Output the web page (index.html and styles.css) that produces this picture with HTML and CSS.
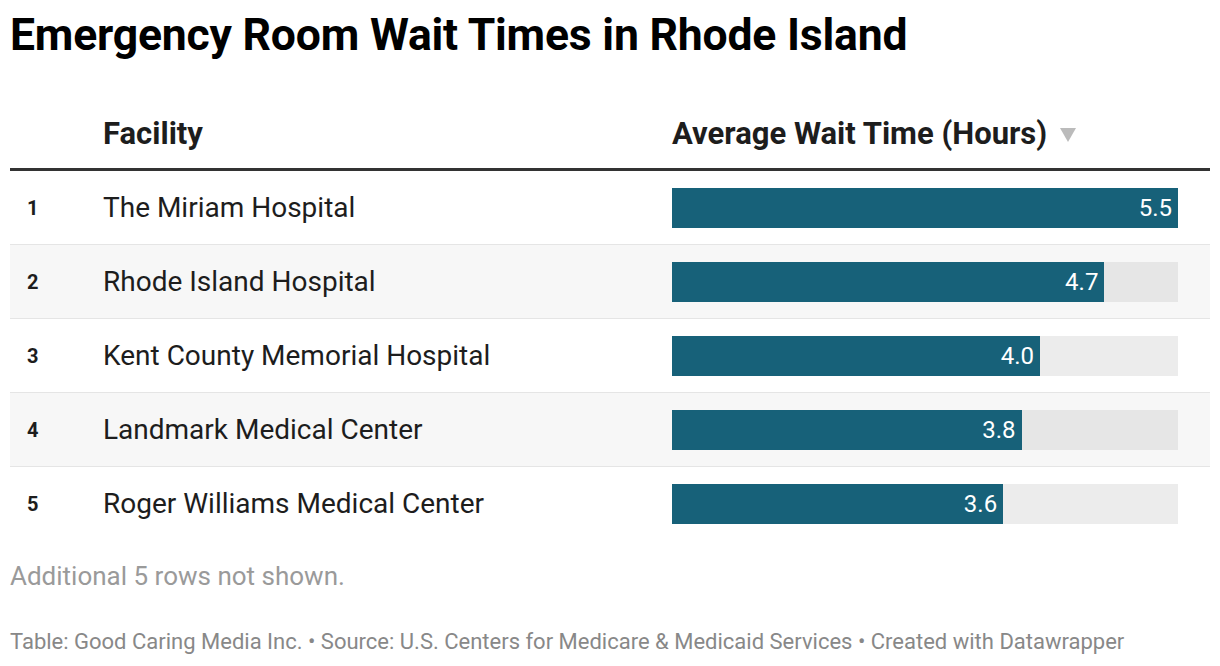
FILE: index.html
```html
<!DOCTYPE html>
<html>
<head>
<meta charset="utf-8">
<link rel="stylesheet" href="styles.css">
</head>
<body>
<div class="chart">
  <h1 class="title">Emergency Room Wait Times in Rhode Island</h1>
  <div class="table">
    <div class="row head">
      <div class="rank"></div>
      <div class="name">Facility</div>
      <div class="val">Average Wait Time (Hours)<svg class="sort" width="16" height="14" viewBox="0 0 16 14"><polygon points="0,0 16,0 8,14" fill="#bbbbbb"/></svg></div>
    </div>
    <div class="row">
      <div class="rank">1</div>
      <div class="name">The Miriam Hospital</div>
      <div class="val"><div class="track"><div class="bar" style="width:100%">5.5</div></div></div>
    </div>
    <div class="row alt">
      <div class="rank">2</div>
      <div class="name">Rhode Island Hospital</div>
      <div class="val"><div class="track"><div class="bar" style="width:85.45%">4.7</div></div></div>
    </div>
    <div class="row">
      <div class="rank">3</div>
      <div class="name">Kent County Memorial Hospital</div>
      <div class="val"><div class="track"><div class="bar" style="width:72.73%">4.0</div></div></div>
    </div>
    <div class="row alt">
      <div class="rank">4</div>
      <div class="name">Landmark Medical Center</div>
      <div class="val"><div class="track"><div class="bar" style="width:69.09%">3.8</div></div></div>
    </div>
    <div class="row last">
      <div class="rank">5</div>
      <div class="name">Roger Williams Medical Center</div>
      <div class="val"><div class="track"><div class="bar" style="width:65.45%">3.6</div></div></div>
    </div>
  </div>
  <p class="note">Additional 5 rows not shown.</p>
  <p class="footer">Table: Good Caring Media Inc. • Source: U.S. Centers for Medicare &amp; Medicaid Services • Created with Datawrapper</p>
</div>
</body>
</html>
```

FILE: styles.css
```css
html, body {
  margin: 0;
  padding: 0;
  background: #ffffff;
}
.chart {
  padding: 0 10px;
  font-family: Roboto, "Liberation Sans", sans-serif;
  color: #1d1d1d;
}
.title {
  margin: 0;
  padding-top: 10px;
  font-size: 44.5px;
  line-height: 50px;
  font-weight: 700;
  color: #000;
  letter-spacing: -0.2px;
}
.table {
  margin-top: 43px;
}
.row {
  display: grid;
  grid-template-columns: 93px 569px 506px 32px;
  align-items: center;
  height: 73px;
  border-bottom: 1px solid #e5e5e5;
}
.row.head {
  height: 65px;
  align-items: start;
  border-bottom: 3px solid #333;
}
.row.alt {
  background: #f7f7f7;
}
.row.last {
  border-bottom: none;
}
.rank {
  padding-left: 17px;
  font-size: 20px;
  font-weight: 700;
}
.name {
  font-size: 28px;
}
.head .name, .head .val {
  font-size: 31px;
  line-height: 36px;
  font-weight: 700;
  padding-top: 13px;
}
.head .val {
  white-space: nowrap;
  display: flex;
  align-items: center;
}
.sort {
  margin-left: 13px;
  margin-top: 2px;
}
.track {
  height: 40px;
  background: #ececec;
}
.alt .track {
  background: #e6e6e6;
}
.bar {
  height: 40px;
  background: #176179;
  color: #fff;
  font-size: 24px;
  line-height: 40px;
  text-align: right;
  padding-right: 6px;
  box-sizing: border-box;
}
.note {
  margin: 21px 0 0;
  font-size: 26px;
  line-height: 30px;
  color: #9a9a9a;
}
.footer {
  margin: 38px 0 0;
  font-size: 22px;
  line-height: 26px;
  color: #888;
}
```
